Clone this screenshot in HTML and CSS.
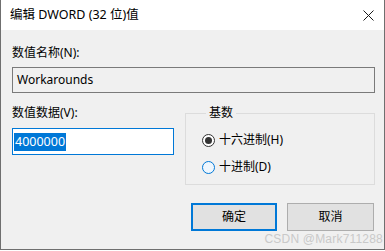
FILE: index.html
```html
<!DOCTYPE html>
<html lang="zh-CN">
<head>
<meta charset="utf-8">
<title>编辑 DWORD (32 位)值</title>
<link rel="stylesheet" href="styles.css">
</head>
<body>
<div class="dialog">
  <div class="titlebar">
    <span class="title">编辑 DWORD (32 位)值</span>
    <span class="close">
      <svg width="11" height="11" viewBox="0 0 11 11"><path d="M0.5 0.5 L10.5 10.5 M10.5 0.5 L0.5 10.5" stroke="#1a1a1a" stroke-width="1" fill="none"/></svg>
    </span>
  </div>
  <div class="content">
    <div class="label first">数值名称(N):</div>
    <div class="namebox">Workarounds</div>
    <div class="row">
      <div class="col-left">
        <div class="label second">数值数据(V):</div>
        <div class="valuebox"><span class="sel">4000000</span></div>
      </div>
      <fieldset class="group">
        <legend>基数</legend>
        <div class="radio-row"><span class="radio checked"></span><span class="rlabel">十六进制(H)</span></div>
        <div class="radio-row"><span class="radio hover"></span><span class="rlabel">十进制(D)</span></div>
      </fieldset>
    </div>
    <div class="buttons">
      <div class="btn default">确定</div>
      <div class="btn">取消</div>
    </div>
  </div>
  <div class="watermark">CSDN @Mark711288</div>
</div>
</body>
</html>
```
FILE: styles.css
```css
html, body {
  margin: 0;
  padding: 0;
  background: #ffffff;
}
.dialog {
  position: relative;
  width: 385px;
  height: 250px;
  box-sizing: border-box;
  border-left: 1px solid #6f6f6f;
  border-right: 1px solid #6f6f6f;
  border-bottom: 1px solid #6f6f6f;
  background: #f0f0f0;
  font-family: "Noto Sans", "Noto Sans CJK SC", sans-serif;
  font-size: 12px;
  color: #000;
  overflow: hidden;
}
.titlebar {
  height: 30px;
  background: #ffffff;
  display: flex;
  align-items: center;
  justify-content: space-between;
  padding-left: 9px;
  padding-right: 9px;
}
.title {
  font-size: 12.5px;
  line-height: 16px;
}
.close {
  display: flex;
  width: 11px;
  height: 11px;
  margin-right: 1px;
}
.content {
  padding: 0 9px 0 11px;
}
.label {
  line-height: 16px;
  height: 16px;
  white-space: nowrap;
}
.label.first {
  margin-top: 15px;
}
.namebox {
  margin-top: 6px;
  height: 26px;
  box-sizing: border-box;
  border: 1px solid #7a7a7a;
  background: #f0f0f0;
  padding-left: 4px;
  line-height: 24px;
}
.row {
  display: flex;
  gap: 11px;
}
.col-left {
  width: 162px;
}
.label.second {
  margin-top: 12px;
}
.valuebox {
  margin-top: 7px;
  height: 27px;
  box-sizing: border-box;
  border: 1px solid #0078d7;
  background: #ffffff;
  padding: 3px 1px;
  line-height: 19px;
}
.sel {
  display: inline-block;
  background: #0078d7;
  color: #ffffff;
  font-size: 12.5px;
  line-height: 18px;
  padding: 0 1px;
}
.group {
  margin: 12px 0 0 0;
  width: 190px;
  box-sizing: border-box;
  border: 1px solid #dcdcdc;
  padding: 9px 0 7px 16px;
  min-width: 0;
}
.group legend {
  padding: 0 3px;
  margin-left: 4px;
  line-height: 16px;
  height: 16px;
}
.radio-row {
  display: flex;
  align-items: center;
  height: 20px;
}
.radio-row + .radio-row {
  margin-top: 7px;
}
.radio {
  width: 13px;
  height: 13px;
  box-sizing: border-box;
  border-radius: 50%;
  border: 1px solid #333333;
  background: #ffffff;
  display: flex;
  align-items: center;
  justify-content: center;
}
.radio.checked::after {
  content: "";
  width: 7px;
  height: 7px;
  border-radius: 50%;
  background: #333333;
}
.radio.hover {
  border-color: #0078d7;
  background: #eef6fd;
}
.rlabel {
  margin-left: 4px;
  line-height: 16px;
}
.buttons {
  display: flex;
  justify-content: flex-end;
  gap: 10px;
  margin-top: 18px;
  margin-right: 1px;
}
.btn {
  width: 87px;
  height: 28px;
  box-sizing: border-box;
  border: 1px solid #adadad;
  background: #e1e1e1;
  display: flex;
  align-items: center;
  justify-content: center;
  line-height: 16px;
}
.btn.default {
  width: 86px;
  border: 2px solid #0078d7;
}
.watermark {
  position: absolute;
  right: 1px;
  bottom: 4px;
  font-family: "Liberation Sans", "Noto Sans", sans-serif;
  font-size: 12px;
  line-height: 12px;
  color: #c9c9c9;
  letter-spacing: 0.2px;
}
```
